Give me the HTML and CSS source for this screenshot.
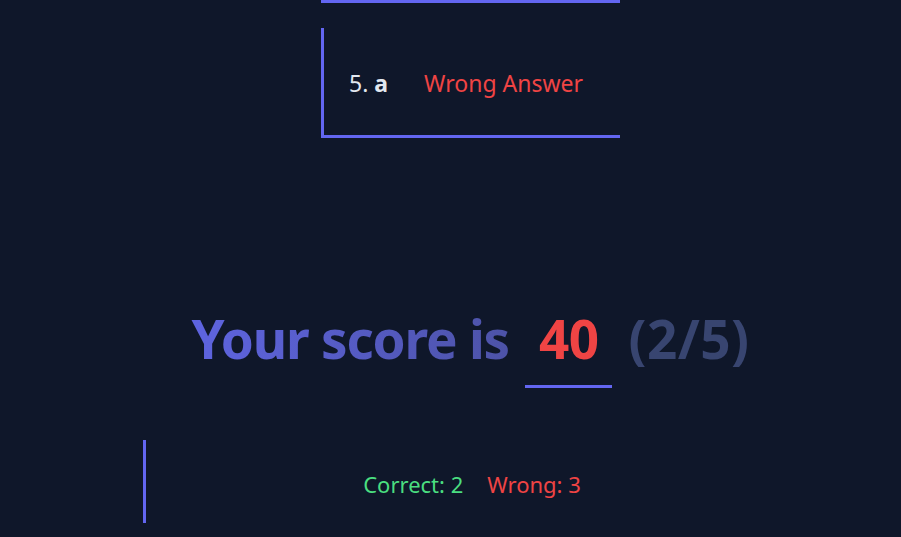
FILE: index.html
```html
<!DOCTYPE html>
<html lang="en">
<head>
<meta charset="utf-8">
<title>Quiz Result</title>
<link rel="stylesheet" href="styles.css">
</head>
<body>
<main class="page">
  <section class="answers">
    <div class="answer answer-prev"></div>
    <div class="answer">
      <span class="answer-num">5. <b>a</b></span>
      <span class="answer-status wrong">Wrong Answer</span>
    </div>
  </section>
  <h1 class="score"><span class="score-label">Your score is</span> <span class="score-value">40</span> <span class="score-ratio">(2/5)</span></h1>
  <section class="stats">
    <span class="stat correct">Correct: 2</span>
    <span class="stat wrong">Wrong: 3</span>
  </section>
</main>
</body>
</html>
```
FILE: styles.css
```css
* { box-sizing: border-box; }
html, body {
  margin: 0;
  padding: 0;
  background: #0f172a;
  height: 100%;
  overflow: hidden;
}
body {
  font-family: "Segoe UI", "Noto Sans", "Open Sans", sans-serif;
  color: #e2e8f0;
}
.page {
  margin-left: 143px;
  width: 655px;
  display: flex;
  flex-direction: column;
  align-items: center;
}
.answers {
  display: flex;
  flex-direction: column;
  align-items: center;
  gap: 25px;
}
.answer {
  width: 299px;
  height: 110px;
  border-left: 3px solid #6366f1;
  border-bottom: 3px solid #6366f1;
  display: flex;
  align-items: center;
  padding-left: 25px;
  padding-top: 2px;
  font-size: 23px;
}
.answer-prev {
  height: 3px;
  border-left: none;
  padding: 0;
}
.answer-num b { font-weight: 700; }
.answer-status { margin-left: 36px; }
.wrong { color: #ef4444; }
.correct { color: #4ade80; }
.score {
  margin: 174px 0 0 0;
  font-size: 53px;
  font-weight: 700;
  line-height: 1;
  white-space: nowrap;
  display: flex;
  align-items: baseline;
  gap: 16px;
}
.score-label {
  letter-spacing: -1.2px;
  background: linear-gradient(90deg, #5e64e0 0%, #4d53a8 100%);
  -webkit-background-clip: text;
  background-clip: text;
  color: transparent;
}
.score-value {
  color: #ef4444;
  letter-spacing: -0.6px;
  padding: 0 14px 20px;
  border-bottom: 3px solid #6366f1;
}
.score-ratio {
  color: #384570;
  letter-spacing: 0.5px;
}
.stats {
  align-self: stretch;
  margin-top: 52px;
  height: 83px;
  border-left: 3px solid #6366f1;
  display: flex;
  align-items: center;
  justify-content: center;
  gap: 24px;
  font-size: 22px;
  padding-top: 4px;
}
```
